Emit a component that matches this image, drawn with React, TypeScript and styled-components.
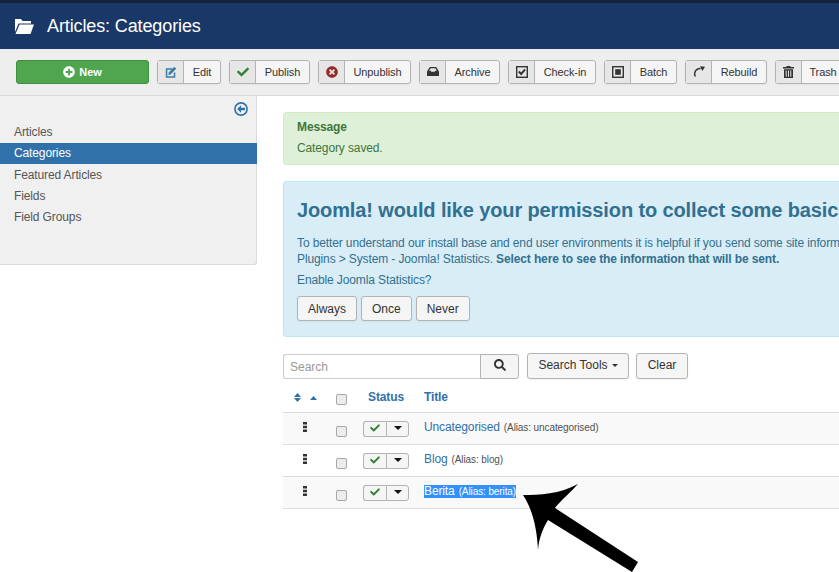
import { ReactNode } from 'react'
import styled, { createGlobalStyle } from 'styled-components'
import { FaCheck, FaPlusCircle, FaSearch, FaTimesCircle } from 'react-icons/fa'

const GlobalStyle = createGlobalStyle`
  html, body {
    margin: 0;
    padding: 0;
    height: 100%;
    overflow: hidden;
    background: #fff;
  }
  body {
    font-family: 'Liberation Sans', Arial, sans-serif;
    font-size: 12px;
    line-height: 18px;
    letter-spacing: -0.12px;
    color: #515151;
  }
`

const Page = styled.div`
  position: relative;
  width: 839px;
  height: 572px;
  overflow: hidden;
`

const Header = styled.header`
  display: flex;
  align-items: center;
  height: 46px;
  padding-left: 15px;
  gap: 13px;
  background: #1a3867;
  border-top: 3px solid #14243f;
  color: #fff;
`

const HeaderTitle = styled.h1`
  margin: 0;
  font-size: 18px;
  font-weight: 400;
  line-height: 46px;
  white-space: nowrap;
`

const Toolbar = styled.div`
  display: flex;
  align-items: center;
  gap: 8px;
  height: 46px;
  padding-left: 16px;
  background: #eee;
  border-bottom: 1px solid #dcdcdc;
  white-space: nowrap;
`

const NewButton = styled.button`
  display: flex;
  flex: none;
  align-items: center;
  justify-content: center;
  gap: 4px;
  width: 133px;
  height: 24px;
  padding: 0;
  background: #4fa64f;
  border: 1px solid #3f8f3f;
  border-radius: 3px;
  color: #fff;
  font: bold 11px 'Liberation Sans', Arial, sans-serif;
`

const ToolButton = styled.button<{ $width: number }>`
  display: flex;
  align-items: stretch;
  flex: none;
  box-sizing: border-box;
  width: ${(p) => p.$width}px;
  height: 24px;
  padding: 0;
  background: #f5f5f5;
  border: 1px solid #b3b3b3;
  border-radius: 3px;
  color: #333;
  font: 11px 'Liberation Sans', Arial, sans-serif;
  letter-spacing: -0.1px;
  box-shadow: 0 1px 2px rgba(0, 0, 0, 0.05);
`

const ToolIcon = styled.span<{ $color?: string }>`
  display: flex;
  flex: none;
  align-items: center;
  justify-content: center;
  width: 25px;
  padding-bottom: 1px;
  background: #e6e6e6;
  border-right: 1px solid #b3b3b3;
  color: ${(p) => p.$color ?? '#333'};
`

const ToolLabel = styled.span`
  display: flex;
  flex: 1;
  align-items: center;
  justify-content: center;
`

const Body = styled.div`
  display: flex;
  align-items: flex-start;
`

const Sidebar = styled.nav`
  flex: none;
  width: 256px;
  height: 168px;
  background: #f0f0f0;
  border-right: 1px solid #dcdcdc;
  border-bottom: 1px solid #dcdcdc;
  border-bottom-right-radius: 3px;
`

const SidebarToggle = styled.div`
  display: flex;
  justify-content: flex-end;
  height: 26px;
  padding: 6px 8px 0 0;
  box-sizing: border-box;
`

const SidebarItem = styled.div<{ $active?: boolean }>`
  height: 21px;
  margin: 0 ${(p) => (p.$active ? '-1px' : '0')} ${(p) => (p.$active ? '1px' : '0')} 0;
  padding-left: 14px;
  line-height: 21px;
  background: ${(p) => (p.$active ? '#3071a9' : 'transparent')};
  color: ${(p) => (p.$active ? '#fff' : '#555')};
`

const Main = styled.main`
  flex: none;
  width: 900px;
  margin-left: 26px;
  padding-top: 16px;
`

const SuccessBox = styled.div`
  box-sizing: border-box;
  height: 53px;
  padding: 5px 13px;
  background: #dff0d8;
  border: 1px solid #d6e9c6;
  border-radius: 3px;
  color: #3c763d;
`

const SuccessTitle = styled.div`
  font-weight: bold;
  margin-bottom: 3px;
`

const InfoBox = styled.div`
  box-sizing: border-box;
  height: 156px;
  margin-top: 16px;
  padding: 13px 13px;
  background: #d9edf7;
  border: 1px solid #bce8f1;
  border-radius: 3px;
  color: #31708f;
`

const InfoHeading = styled.h2`
  margin: 0 0 10px;
  font-size: 20px;
  line-height: 30px;
  font-weight: bold;
  white-space: nowrap;
`

const InfoText = styled.p`
  margin: 0 0 5px;
  line-height: 16px;
  white-space: nowrap;
`

const ButtonRow = styled.div`
  display: flex;
  gap: 4px;
  margin-top: 8px;
`

const PlainButton = styled.button`
  height: 25px;
  padding: 0 10px;
  background: #f5f5f5;
  border: 1px solid #b3b3b3;
  border-radius: 3px;
  color: #333;
  font: 12px 'Liberation Sans', Arial, sans-serif;
  box-shadow: 0 1px 2px rgba(0, 0, 0, 0.05);
`

const FilterBar = styled.div`
  display: flex;
  align-items: flex-end;
  gap: 7px;
  margin-top: 16px;
`

const SearchGroup = styled.div`
  display: flex;
  width: 236px;
  height: 25px;
  margin-right: 1px;
`

const SearchInput = styled.input`
  box-sizing: border-box;
  width: 197px;
  height: 25px;
  padding: 0 6px;
  background: #fff;
  border: 1px solid #ccc;
  border-right: 0;
  border-radius: 3px 0 0 3px;
  font: 12px 'Liberation Sans', Arial, sans-serif;
  &::placeholder {
    color: #999;
  }
`

const SearchButton = styled.button`
  display: flex;
  align-items: center;
  justify-content: center;
  width: 39px;
  height: 25px;
  padding: 0 0 3px;
  background: #f5f5f5;
  border: 1px solid #b3b3b3;
  border-radius: 0 3px 3px 0;
  color: #333;
`

const FilterButton = styled(PlainButton)<{ $width: number }>`
  width: ${(p) => p.$width}px;
  height: 26px;
  padding: 0 0 2px;
`

const Caret = styled.span`
  display: inline-block;
  margin-left: 4px;
  vertical-align: middle;
  border-top: 3px solid #333;
  border-left: 3px solid transparent;
  border-right: 3px solid transparent;
`

const Table = styled.table`
  width: 900px;
  margin-top: 6px;
  border-collapse: collapse;
  table-layout: fixed;
`

const Th = styled.th<{ $width?: number; $left?: boolean }>`
  width: ${(p) => (p.$width ? `${p.$width}px` : 'auto')};
  height: 27px;
  padding: 0 0 2px;
  box-sizing: border-box;
  color: #3071a9;
  font-weight: bold;
  text-align: ${(p) => (p.$left ? 'left' : 'center')};
  vertical-align: middle;
`

const TitleTh = styled(Th)`
  padding-left: 5px;
  text-align: left;
`

const SortCell = styled.div`
  display: flex;
  align-items: center;
  padding: 1px 0 0 11px;
  gap: 9px;
`

const Row = styled.tr<{ $striped?: boolean }>`
  height: 32px;
  background: ${(p) => (p.$striped ? '#f9f9f9' : '#fff')};
  border-top: 1px solid #ddd;
  &:last-child {
    border-bottom: 1px solid #ddd;
  }
`

const Td = styled.td`
  padding: 0;
  text-align: center;
  vertical-align: top;
`

const TitleTd = styled.td`
  padding: 5px 0 0 5px;
  vertical-align: top;
`

const HandleWrap = styled.div`
  display: flex;
  justify-content: center;
  padding: 9px 3px 0 0;
`

const Check = styled.input<{ $top: number }>`
  appearance: none;
  display: block;
  box-sizing: border-box;
  width: 11px;
  height: 11px;
  margin: ${(p) => p.$top}px auto 0;
  background: #ececec;
  border: 1px solid #a8a8a8;
  border-radius: 2px;
`

const StatusGroup = styled.div`
  display: flex;
  width: 46px;
  height: 16px;
  margin: 8px 0 0 10px;
`

const StatusCheck = styled.span`
  display: flex;
  align-items: center;
  justify-content: center;
  box-sizing: border-box;
  width: 23px;
  padding-bottom: 2px;
  background: #f5f5f5;
  border: 1px solid #b3b3b3;
  border-right: 0;
  border-radius: 3px 0 0 3px;
  color: #378137;
`

const StatusMenu = styled.span`
  display: flex;
  align-items: center;
  justify-content: center;
  box-sizing: border-box;
  width: 23px;
  padding-bottom: 2px;
  background: #f5f5f5;
  border: 1px solid #b3b3b3;
  border-radius: 0 3px 3px 0;
`

const MenuCaret = styled.span`
  border-top: 4px solid #111;
  border-left: 4px solid transparent;
  border-right: 4px solid transparent;
`

const TitleLink = styled.span`
  color: #3071a9;
  font-size: 12px;
`

const Alias = styled.span`
  margin-left: 4px;
  font-size: 10px;
  letter-spacing: -0.1px;
  color: #515151;
`

const Selected = styled.span`
  display: inline-block;
  height: 13px;
  line-height: 13px;
  margin-top: 3px;
  background: #3390ff;
  span {
    color: #fff;
  }
`

const ArrowOverlay = styled.svg`
  position: absolute;
  left: 515px;
  top: 475px;
`

const FolderIcon = () => (
  <svg width="19" height="15" viewBox="0 0 19 15">
    <path d="M0 0h6l1.500 2H16v2.500H3.500L0 13z" fill="#fff" />
    <path d="M4.500 5.500H19L15.500 15H.5z" fill="#fff" />
  </svg>
)

const EditIcon = () => (
  <svg width="12" height="12" viewBox="0 0 12 12">
    <path d="M.8 2.200h6.400v1.500H2.300v6.500h6.500V6.500h1.500v5.200H.8z" fill="currentColor" />
    <path d="M3.800 6.600L9.200.8l2 1.900-5.700 5.800-2.100.4z" fill="currentColor" />
  </svg>
)

const ArchiveIcon = () => (
  <svg width="12" height="9" viewBox="0 0 12 9">
    <path d="M2.800 0h6.400L12 4.500V9H0V4.500z" fill="#333" />
    <path d="M3.600 1.200h4.800l1.500 2.600H8.300l-.6 1H4.300l-.6-1H2.100z" fill="#e6e6e6" />
  </svg>
)

const CheckinIcon = () => (
  <svg width="12" height="12" viewBox="0 0 12 12">
    <rect x="0.7" y="0.7" width="10.600" height="10.600" fill="none" stroke="#333" strokeWidth="1.400" />
    <path d="M2.800 5.500l2.300 2.400 4-4.600" fill="none" stroke="#333" strokeWidth="2" />
  </svg>
)

const BatchIcon = () => (
  <svg width="12" height="12" viewBox="0 0 12 12">
    <rect x="0.7" y="0.7" width="10.600" height="10.600" fill="none" stroke="#333" strokeWidth="1.400" />
    <rect x="3.200" y="3.200" width="5.600" height="5.600" fill="#333" />
  </svg>
)

const RebuildIcon = () => (
  <svg width="12" height="11" viewBox="0 0 12 11">
    <path d="M2.300 10.500C.5 7 2.500 2.600 7.500 2.500" fill="none" stroke="#333" strokeWidth="1.500" />
    <path d="M7 .2L12 .8 9.400 5z" fill="#333" />
  </svg>
)

const TrashIcon = () => (
  <svg width="11" height="12" viewBox="0 0 11 12">
    <path d="M3.500 0h4v1h3.500v1.500H0V1h3.500z" fill="#333" />
    <path d="M1 3.200h9V12H1zM2.700 4.500v6.200h1V4.500zM5 4.500v6.200h1V4.500zM7.300 4.500v6.200h1V4.500z" fill="#333" fillRule="evenodd" />
  </svg>
)

const CollapseIcon = () => (
  <svg width="14" height="14" viewBox="0 0 14 14">
    <circle cx="7" cy="7" r="6.100" fill="none" stroke="#3071a9" strokeWidth="1.600" />
    <path d="M7 3.300L3.200 7 7 10.700V8.200h4V5.800H7z" fill="#3071a9" />
  </svg>
)

const SortBoth = () => (
  <svg width="7" height="9" viewBox="0 0 7 9">
    <path d="M3.500 0L7 4H0zM0 5h7L3.500 9z" fill="#3071a9" />
  </svg>
)

const SortUp = () => (
  <svg width="7" height="4" viewBox="0 0 7 4">
    <path d="M3.500 0L7 4H0z" fill="#3071a9" />
  </svg>
)

const DragHandle = () => (
  <svg width="4" height="10" viewBox="0 0 4 10">
    <path d="M0 0h4v2.500H0zM0 3.700h4v2.500H0zM0 7.500h4V10H0z" fill="#333" />
  </svg>
)

type Tool = { label: string; icon: ReactNode; width: number; color?: string }

const tools: Tool[] = [
  { label: 'Edit', icon: <EditIcon />, width: 64, color: '#3d7ba8' },
  { label: 'Publish', icon: <FaCheck size={12} />, width: 81, color: '#378137' },
  { label: 'Unpublish', icon: <FaTimesCircle size={12} />, width: 93, color: '#942a25' },
  { label: 'Archive', icon: <ArchiveIcon />, width: 81 },
  { label: 'Check-in', icon: <CheckinIcon />, width: 88 },
  { label: 'Batch', icon: <BatchIcon />, width: 73 },
  { label: 'Rebuild', icon: <RebuildIcon />, width: 82 },
  { label: 'Trash', icon: <TrashIcon />, width: 70 },
]

const navItems = ['Articles', 'Categories', 'Featured Articles', 'Fields', 'Field Groups']

const categories = [
  { title: 'Uncategorised', alias: 'uncategorised' },
  { title: 'Blog', alias: 'blog' },
  { title: 'Berita', alias: 'berita', selected: true },
]

const App = () => {
  return (
    <Page>
      <GlobalStyle />
      <Header>
        <FolderIcon />
        <HeaderTitle>Articles: Categories</HeaderTitle>
      </Header>
      <Toolbar>
        <NewButton>
          <FaPlusCircle size={12} />
          New
        </NewButton>
        {tools.map((tool) => (
          <ToolButton key={tool.label} $width={tool.width}>
            <ToolIcon $color={tool.color}>{tool.icon}</ToolIcon>
            <ToolLabel>{tool.label}</ToolLabel>
          </ToolButton>
        ))}
      </Toolbar>
      <Body>
        <Sidebar>
          <SidebarToggle>
            <CollapseIcon />
          </SidebarToggle>
          {navItems.map((item) => (
            <SidebarItem key={item} $active={item === 'Categories'}>
              {item}
            </SidebarItem>
          ))}
        </Sidebar>
        <Main>
          <SuccessBox>
            <SuccessTitle>Message</SuccessTitle>
            <div>Category saved.</div>
          </SuccessBox>
          <InfoBox>
            <InfoHeading>Joomla! would like your permission to collect some basic statistics.</InfoHeading>
            <InfoText>
              To better understand our install base and end user environments it is helpful if you send some site information back to a Joomla! run server.
              <br />
              Plugins &gt; System - Joomla! Statistics. <b>Select here to see the information that will be sent.</b>
            </InfoText>
            <InfoText>Enable Joomla Statistics?</InfoText>
            <ButtonRow>
              <PlainButton>Always</PlainButton>
              <PlainButton>Once</PlainButton>
              <PlainButton>Never</PlainButton>
            </ButtonRow>
          </InfoBox>
          <FilterBar>
            <SearchGroup>
              <SearchInput placeholder="Search" />
              <SearchButton>
                <FaSearch size={12} />
              </SearchButton>
            </SearchGroup>
            <FilterButton $width={102}>
              Search Tools
              <Caret />
            </FilterButton>
            <FilterButton $width={52}>Clear</FilterButton>
          </FilterBar>
          <Table>
            <thead>
              <tr>
                <Th $width={47} $left>
                  <SortCell>
                    <SortBoth />
                    <SortUp />
                  </SortCell>
                </Th>
                <Th $width={23}>
                  <Check type="checkbox" $top={4} />
                </Th>
                <Th $width={66}>Status</Th>
                <TitleTh>Title</TitleTh>
              </tr>
            </thead>
            <tbody>
              {categories.map((cat, index) => (
                <Row key={cat.alias} $striped={index % 2 === 0}>
                  <Td>
                    <HandleWrap>
                      <DragHandle />
                    </HandleWrap>
                  </Td>
                  <Td>
                    <Check type="checkbox" $top={13} />
                  </Td>
                  <Td>
                    <StatusGroup>
                      <StatusCheck>
                        <FaCheck size={10} />
                      </StatusCheck>
                      <StatusMenu>
                        <MenuCaret />
                      </StatusMenu>
                    </StatusGroup>
                  </Td>
                  <TitleTd>
                    {cat.selected ? (
                      <Selected>
                        <TitleLink>{cat.title}</TitleLink>
                        <Alias>(Alias: {cat.alias})</Alias>
                      </Selected>
                    ) : (
                      <>
                        <TitleLink>{cat.title}</TitleLink>
                        <Alias>(Alias: {cat.alias})</Alias>
                      </>
                    )}
                  </TitleTd>
                </Row>
              ))}
            </tbody>
          </Table>
        </Main>
      </Body>
      <ArrowOverlay width="130" height="100" viewBox="0 0 130 100">
        <path
          d="M8 20C24 20 45 19 63 9C55 18 46 25 40 33L123 87L117 97L33 45C27 55 24 64 23 75C22 55 18 35 8 20Z"
          fill="#000"
        />
      </ArrowOverlay>
    </Page>
  )
}

export default App
